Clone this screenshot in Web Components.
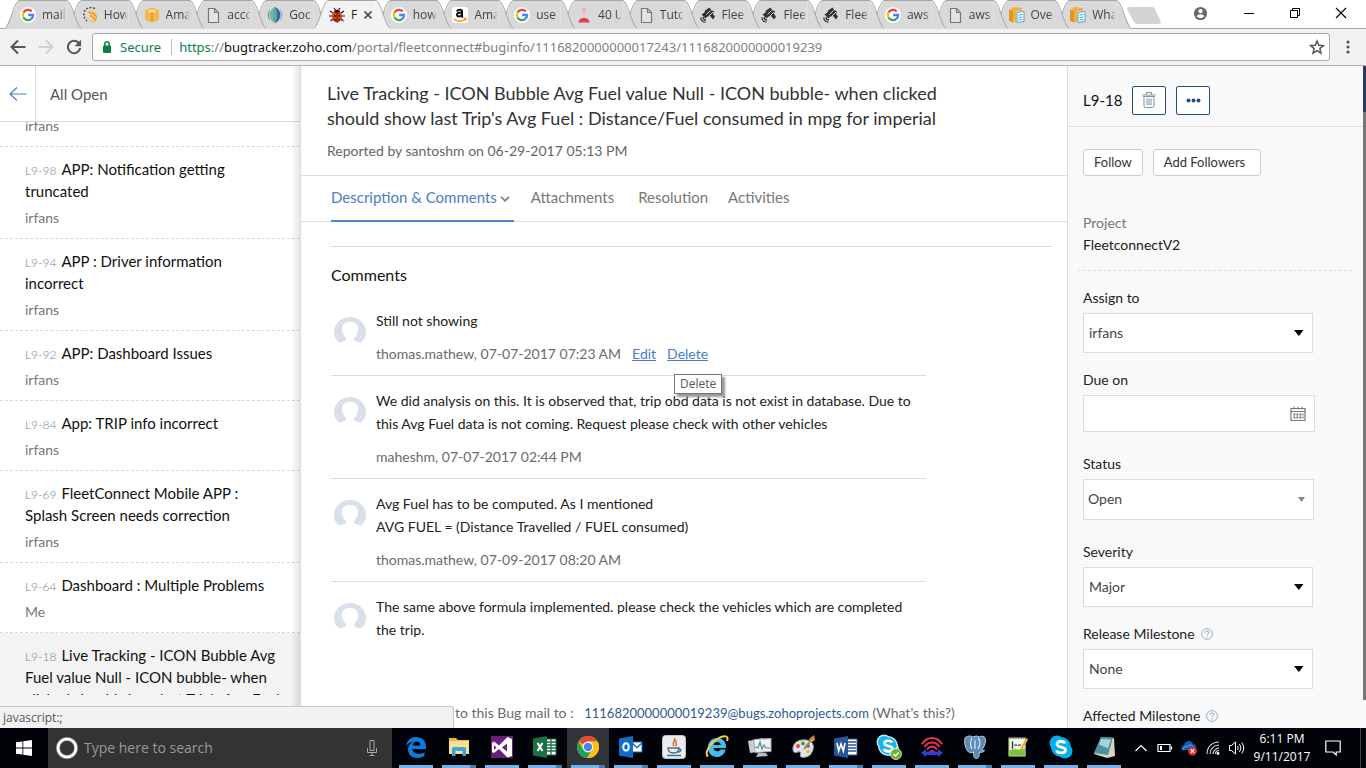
<!DOCTYPE html>
<html lang="en">
<head>
<meta charset="utf-8">
<title>FleetConnect - Bug L9-18</title>
<style>
html,body{margin:0;height:100%}
body{overflow:hidden;background:#fff;font-family:Lato,Carlito,sans-serif}
</style>
</head>
<body>
<desktop-screen></desktop-screen>
<script>
const ICONS={
google:['0 0 24 24','<circle cx="12" cy="12" r="12" fill="#fff"/><g fill="none" stroke-width="3.4"><path stroke="#ea4335" d="M17.6 6.6A7.8 7.8 0 0 0 5.2 8.2"/><path stroke="#fbbc05" d="M5.2 8.2a7.8 7.8 0 0 0 0 7.6"/><path stroke="#34a853" d="M5.2 15.8a7.8 7.8 0 0 0 11.800 2"/><path stroke="#4285f4" d="M17 17.800a7.800 7.800 0 0 0 2.700-5.800H12.200"/></g>'],
how:['0 0 16 16','<path fill="#f6a12a" d="M6 5c4-3 8-1 9 3 1 4-2 8-6 8 2-1 3-2 3-4-2 2-4 2-6 2 3-1 4-2 4-4-2 1-4 1-6 0 3 0 4-1 4-2-1-1-1-2-2-3z"/><path fill="none" stroke="#fff" stroke-width=".7" d="M6 7c3 0 6 2 8 4M5 9c3 1 5 2 6 5M8 4c3 0 5 1 7 4"/><path fill="none" stroke="#444" stroke-width="1.400" stroke-dasharray="2 1.500" d="M13 1.500C8-.5 3 1 2 6c-.5 3 .5 6 3 8"/>'],
cube:['0 0 16 16','<path fill="#f2b84b" d="M1 3l5-2h4l5 2v10l-5 2H6l-5-2z"/><path fill="#f9d58d" d="M4 3.500l4-1.500 4 1.500v2H4z"/><path fill="#e2a233" d="M7 6h2v8H7z"/>'],
page:['0 0 16 16','<path fill="#e4e4e4" stroke="#777" stroke-width="1.200" d="M3.500 1.500h6l4 4v10h-10z"/><path fill="none" stroke="#777" stroke-width="1.200" d="M9.500 1.500v4h4"/>'],
globe:['0 0 16 16','<path fill="#6cc08f" d="M8 0C1 2 1 14 8 16z"/><path fill="#44608f" d="M8 0c7 2 7 14 0 16z"/><path fill="#8583c8" d="M3 2C0 6 0 10 3 14c-1-4-1-8 0-12z"/><path fill="#7fa8cf" d="M13 2c3 4 3 8 0 12 1-4 1-8 0-12z"/><path fill="#5aa7ae" d="M8 0C5 5 5 11 8 16c3-5 3-11 0-16z"/>'],
bug:['0 0 16 16','<path fill="none" stroke="#3a1409" stroke-width="1.200" d="M5 1l2 3M11 1L9 4M4 6L1 4M12 6l3-2M3 9H0M13 9h3M4 12l-2.500 2M12 12l2.500 2"/><ellipse cx="8" cy="9.500" rx="5" ry="6" fill="#d8421c"/><path fill="#3a1409" d="M5 5c0-3 6-3 6 0L8 6zM7.600 5h.8v10.500h-.8zM5 8h1.600v1.800H5zM9.400 8H11v1.800H9.400zM5 12h1.600v1.600H5zM9.400 12H11v1.600H9.400z"/>'],
amazon:['0 0 16 16','<rect width="16" height="16" rx="3" fill="#fff"/><path fill="none" stroke="#111" stroke-width="2" d="M5 4.500C5.500 2 10 2 10 4.500V9c0 .6.3 1 1 1.300M10 5.500C6.500 5.300 4.800 6.200 5 8c.3 2 3.800 2 5-.5"/><path fill="none" stroke="#f90" stroke-width="1.500" d="M1.500 12c4 3 9 3 12 0M12 11.500h2l-.5 2"/>'],
flask:['0 0 16 16','<path fill="#efb6b6" d="M6 1h4v4L8.500 7h-1L6 5z"/><path fill="#eccaca" d="M7 8h2l1.500 3h-5z"/><path fill="#e2404a" d="M4 12c1-1.500 7-1.500 8 0l2 3.500H2z"/>'],
sat:['0 0 16 16','<g fill="#333"><path d="M5 3.500l4.500-3 2 3 2.500.5-1 3 2 2.500-2 3-3-3.500-3 .5-3-2.500z"/><path d="M1.500 7.500l3-2 3 4-2 2z"/></g><path stroke="#d9d9d9" d="M6.500 7.500l4-4M9 9l4-4"/><path fill="none" stroke="#333" stroke-width="1.300" d="M.8 10.500a5 5 0 0 0 4.700 4.700M3 10a3 3 0 0 0 3 3"/>'],
awsdoc:['0 0 16 16','<path fill="#f1b13c" d="M0 3l5-3 8 1v3H7v11l-4 .5-3-2z"/><path fill="#dc9623" d="M0 3l4 1v11.500l-4-2z"/><path fill="#fff" stroke="#4aa3dd" d="M8 5.500l7-1v10l-7 1z"/><path stroke="#4aa3dd" d="M9.500 8l4-.5M9.500 10.500l4-.5M9.500 13l4-.5"/>'],
back:['0 0 16 16','<path fill="none" stroke="#555" stroke-width="2" d="M15.500 8H2M8 1.500L1.500 8 8 14.500"/>'],
fwd:['0 0 16 16','<path fill="none" stroke="#d0d0d0" stroke-width="2" d="M.5 8H14M8 1.500L14.500 8 8 14.500"/>'],
reload:['0 0 16 16','<path fill="none" stroke="#555" stroke-width="2" d="M13.200 4.500A6.200 6.200 0 1 0 14.200 9"/><path fill="#555" d="M15 .8v6.400H8.600z"/>'],
lock:['0 0 10 12','<rect x="1" y="4.500" width="8" height="7.500" rx="1" fill="#0b8043"/><path fill="none" stroke="#0b8043" stroke-width="1.500" d="M2.800 5V3a2.200 2.200 0 0 1 4.400 0v2"/>'],
star:['0 0 16 16','<path fill="none" stroke="#555" stroke-width="1.500" stroke-linejoin="miter" d="M8 2l1.800 4.200 4.600.4-3.500 3 1.100 4.500L8 11.700l-4 2.400 1.100-4.500-3.500-3 4.600-.4z"/>'],
dots:['0 0 16 16','<g fill="#555"><circle cx="8" cy="3" r="1.600"/><circle cx="8" cy="8" r="1.600"/><circle cx="8" cy="13" r="1.600"/></g>'],
user:['0 0 16 16','<circle cx="8" cy="8" r="7" fill="#666"/><circle cx="8" cy="5.500" r="2.200" fill="#fff"/><path fill="#fff" d="M3.800 11c1-3 7.400-3 8.400 0-2 2.600-6.400 2.600-8.400 0z"/>'],
min:['0 0 12 12','<path stroke="#000" d="M1 6.500h10"/>'],
restore:['0 0 12 12','<path fill="none" stroke="#000" d="M1.500 3.500h7v7h-7zM3.500 3.500v-2h7v7h-2"/>'],
close:['0 0 12 12','<path stroke="#000" stroke-width="1.100" d="M1 1l10 10M11 1L1 11"/>'],
tabx:['0 0 10 10','<path stroke="#444" stroke-width="1.700" d="M1.500 1.500l7 7M8.500 1.500l-7 7"/>'],
listback:['0 0 18 14','<path fill="none" stroke="#4c80c8" stroke-width="1.200" d="M17.500 7H1M8 .5L1 7l7 6.500"/>'],
caret:['0 0 10 6','<path fill="none" stroke="#7b8494" stroke-width="1.800" d="M1 .8l4 4 4-4"/>'],
avatar:['0 0 32 27','<path fill="#dadfec" d="M5.500 25.500C1.500 23 0 19 0 15.500 0 6.500 7 0 16 0s16 6.500 16 15.500c0 3.500-1.500 7.500-5.500 10l-5-1.500c-2-.8-2-2-1-3.500 2.200-2.500 3.500-5 3.500-8.500 0-4.500-3-7-8-7s-8 2.500-8 7c0 3.500 1.300 6 3.500 8.500 1 1.500 1 2.700-1 3.500z"/>'],
trash:['0 0 14 16','<path fill="none" stroke="#7d8fa8" d="M.5 3h13M4.500 2.500v-2h5v2M2 5.500v8.500q0 1.500 1.500 1.500h7q1.500 0 1.500-1.500V5.500M1 4.500h12M5 6.500V13M7 6.500V13M9 6.500V13"/>'],
more:['0 0 15 5','<g fill="#244f86"><circle cx="2.500" cy="2.500" r="2"/><circle cx="7.500" cy="2.500" r="2"/><circle cx="12.500" cy="2.500" r="2"/></g>'],
tri:['0 0 10 6','<path fill="#000" d="M0 0h9.500L4.800 6z"/>'],
tri2:['0 0 7 5','<path fill="#888" d="M0 0h7L3.500 5z"/>'],
cal:['0 0 16 16','<path fill="#fff" stroke="#777" stroke-width="1.200" d="M1 2.500h14v12H1z"/><path stroke="#777" d="M1 5.500h14M4 .5v3M8 .5v3M12 .5v3"/><path stroke="#666" stroke-width="1.800" stroke-dasharray="1.800 1.200" d="M3.500 8.500h10M3.500 11.500h10"/>'],
help:['0 0 12 12','<circle cx="6" cy="6" r="5.400" fill="none" stroke="#8fa6cc" stroke-width=".9"/><path fill="none" stroke="#7c97c4" d="M4.300 4.700c0-2.200 3.500-2.200 3.500 0C7.800 6 6 6 6 7.300M6 8.300v1.200"/>'],
win:['0 0 16 16','<path fill="#fff" d="M0 2.300l6.500-.9v6.200H0zM7.300 1.300L16 0v7.600H7.300zM0 8.400h6.500v6.200L0 13.700zM7.300 8.400H16V16l-8.700-1.200z"/>'],
cortana:['0 0 22 22','<circle cx="11" cy="11" r="9" fill="none" stroke="#888" stroke-width="4"/><circle cx="11" cy="11" r="9" fill="none" stroke="#fff" stroke-width="2.600"/>'],
mic:['0 0 12 16','<path fill="none" stroke="#aaa" d="M4 .5h4v10H4zM1.500 8v4.500h9V8M6 12.500v3M3.500 15.500h5"/>'],
edge:['0 0 22 22','<path fill="#0a7ddc" d="M1 10C2 4 6 1 11 1c6 0 10 4 10 9.500V13H7.500c.2 3.500 3 4.800 6 4.800 2.500 0 4.500-.7 6-1.600v3.900C17.500 21.300 15 22 12.500 22 7 22 3 18.500 3 13.500c0-3.500 2-6.200 5-7.800-3 .6-5.500 2-7 4.300zM7.600 9.500h7.700c0-2.500-1.300-4-3.700-4-2.300 0-3.700 1.700-4 4z"/>'],
folder:['0 0 22 22','<path fill="#e5b849" d="M1 2h7l2 2h11v5H1z"/><path fill="#fbe08f" d="M1 5h20v13H1z"/><path fill="#39a5d8" d="M4 20v-7q0-2 2-2h10q2 0 2 2v7h-3.500v-5h-7v5z"/>'],
vs:['0 0 22 22','<path fill="#68217a" d="M0 0h22v22H0z"/><path fill="#fff" fill-rule="evenodd" d="M1 7l2-1.500 5 4L16.500 1 21 3v17l-4.500 1.500L8 13l-5 4-2-1zM3 9v5l2.500-2.500zM11 11.500l5 4v-8z"/>'],
excel:['0 0 24 22','<path fill="#fff" stroke="#1d7044" d="M12 3h11v16H12z"/><path stroke="#1d7044" stroke-width="1.300" d="M13 6h10M13 9h10M13 12h10M13 15h10M18 3v16"/><path fill="#1d7044" d="M0 2.500L14 0v22L0 19.500z"/><path stroke="#fff" stroke-width="2" d="M4.500 7l5 8M9.500 7l-5 8"/>'],
chrome:['0 0 22 22','<circle cx="11" cy="11" r="11" fill="#fbc116"/><path fill="#df4a3a" d="M11 11L1.500 5.500A11 11 0 0 1 20.500 5.500H11z"/><path fill="#1fa15d" d="M1.500 5.500A11 11 0 0 0 10 22l5.500-8.500L11 11 6.200 13.500z"/><path fill="#fbc116" d="M11 5.500h9.500A11 11 0 0 1 10 22l5.500-8.500z"/><circle cx="11" cy="11" r="5.400" fill="#fff"/><circle cx="11" cy="11" r="4.200" fill="#4a83ec"/>'],
outlook:['0 0 24 22','<path fill="#fff" stroke="#0f6fc6" d="M12 6h11v10H12z"/><path fill="none" stroke="#0f6fc6" stroke-width="1.500" d="M13 7l5 4.500L23 7"/><path fill="#0f6fc6" d="M0 2.500L14 0v22L0 19.500z"/><ellipse cx="7" cy="11" rx="2.800" ry="3.700" fill="none" stroke="#fff" stroke-width="2"/>'],
java:['0 0 24 24','<rect x=".5" y=".5" width="23" height="23" rx="3" fill="#e9edf0" stroke="#b9c3ca"/><path fill="none" stroke="#e4702a" stroke-width="1.500" d="M12 3c3 2-3 4 0 8M14.500 5c-3 2 2 3-1 6"/><path fill="none" stroke="#48708e" stroke-width="1.400" d="M6 13h11q0 5-5.500 5T6 13zM17 14c3 0 2 3-1 3M5 20.500h14"/>'],
ie:['0 0 24 24','<path fill="#45bdf0" d="M12 3c6 0 9.500 4 9 10H8.500c.5 3.500 5 4.500 7 1.500h5.300C19 20 16 22 12 22 6.500 22 3 18 3 12.500S6.500 3 12 3zm-3.500 7h7.300c-.5-4-6.500-4-7.300 0z"/><path fill="none" stroke="#f7cf30" stroke-width="2" d="M3 21.500C-1 18 5 8 13 3.500 20-.5 24 1 22 6"/>'],
taskmgr:['0 0 24 22','<path fill="#c9ccd0" d="M0 5l15-3v13L2 17z"/><path fill="#eef1f4" stroke="#aab" d="M6 3.500l17-1v13l-16 1z"/><path fill="none" stroke="#5a86a8" stroke-width="1.200" d="M7 11l3 1 2-6 2 7 2-4 2 3h4"/><path fill="#b8bcc2" d="M10 17h8l2 3-12 1z"/>'],
paint:['0 0 24 24','<path fill="#dfe5ea" stroke="#93a3b1" d="M2 15C1 8 8 4 15 5s9 6 6 12c-2 5-8 6-11 5-2-1 1-4-1-5s-6 3-7-2z"/><circle cx="7" cy="11" r="2" fill="#e6492d"/><circle cx="12" cy="8.500" r="2" fill="#39a845"/><circle cx="17" cy="11" r="2" fill="#3b78c9"/><circle cx="17" cy="16.500" r="2" fill="#eec12f"/><path stroke="#c1772e" stroke-width="2" d="M13 14L21 4"/><path fill="#c98d4b" d="M18 4l5-4 1 5-4 3z"/>'],
word:['0 0 24 22','<path fill="#fff" stroke="#2a5699" d="M12 3h11v16H12z"/><path stroke="#2a5699" stroke-width="1.300" d="M13 6h9M13 9h9M13 12h9M13 15h9"/><path fill="#2a5699" d="M0 2.500L14 0v22L0 19.500z"/><path fill="none" stroke="#fff" stroke-width="1.600" d="M3 7l1.700 8L7 8l2.300 7L11 7"/>'],
skypebiz:['0 0 26 26','<circle cx="8" cy="8" r="7.500" fill="#bfe8fa"/><circle cx="16" cy="15" r="7" fill="#bfe8fa"/><circle cx="12" cy="12" r="10" fill="#bfe8fa"/><circle cx="8" cy="8" r="6" fill="#1bb3ee"/><circle cx="12" cy="12" r="8.500" fill="#1bb3ee"/><path fill="none" stroke="#fff" stroke-width="2.600" d="M16 8.500c-1-2.500-7.500-2.500-7.500.7 0 3.600 8 1.800 8 5.500 0 3.500-7.500 3.500-8.500.3"/><circle cx="20" cy="20" r="5.500" fill="#6bb324" stroke="#eee" stroke-width=".8"/><path fill="none" stroke="#fff" stroke-width="1.500" d="M17.500 20l2 2 3.300-3.700"/>'],
waves:['0 0 24 22','<g fill="none" stroke="#e8384f" stroke-width="1.800"><path d="M2 8c5-8 15-8 20 0M4.500 11c4-6 11-6 15 0M7 13.500c3-4 7-4 10 0M10 16c1-1.500 3-1.500 4 0"/></g><path fill="#343bd8" d="M1 17l5-4v2.500h12V13l5 4-5 4v-2H6v2z"/>'],
pg:['0 0 24 24','<path fill="#5c8db7" stroke="#bcd0e0" stroke-width="1" d="M2 3c3-3 6-2 8-1 3-1.500 5-1 6 0 4-2 7 0 6.500 4-.5 4-2 7-4 9l3 .5c-1 2-3 2-5 1.500-.5 3 0 6-3 6.500-3 0-3-3-3-6.500-2 1-4 1-5 0C2 13 1 7 2 3z"/><path fill="none" stroke="#dbe7f0" stroke-width="1.200" d="M9 3c-2 3-2 8 0 11M15 3c3 3 2 8 0 11M12 5v9"/>'],
npp:['0 0 22 24','<path fill="#f4f7ea" stroke="#98a66b" d="M1 2h18v20H1z"/><path fill="#7cc142" d="M1.500 16c5-4 11 1 17-3v8.500h-17z"/><path stroke="#333" stroke-width="1.500" d="M5 6v8M7 10h3M11 10h3"/><path stroke="#555" stroke-width="2" stroke-dasharray="1.500 1.500" d="M2 2h16"/><path stroke="#e9b52c" stroke-width="2.600" d="M21 3l-7 12"/>'],
skype:['0 0 24 24','<circle cx="8" cy="8" r="7.500" fill="#00aff0"/><circle cx="16" cy="16" r="7.500" fill="#00aff0"/><circle cx="12" cy="12" r="10" fill="#00aff0"/><path fill="none" stroke="#fff" stroke-width="2.800" d="M16 8.500c-1-2.800-8-2.800-8 .7 0 3.800 8.500 2 8.500 5.800 0 3.700-8 3.700-9 .3"/>'],
notepad:['0 0 24 22','<path fill="#d9d3c4" d="M2 18L9 1l13 1 1 18-8 2z"/><path fill="#4e8f9c" d="M2 17L9 1l12 .5L16 19z"/><path fill="#a5d3dc" d="M9 3l10 .5-3 9-9-4z"/>'],
chev:['0 0 12 8','<path fill="none" stroke="#fff" stroke-width="1.200" d="M.5 7L6 1.500 11.500 7"/>'],
battery:['0 0 16 10','<path fill="none" stroke="#fff" stroke-width="1.200" d="M1 1.500h12v7H1zM14.500 3.500v3"/><path fill="#fff" d="M3 3h2v4H3z"/>'],
onedrive:['0 0 18 16','<path fill="#0a63b5" d="M2 10C0 7 3 5 4 5c1-5 8-5 9-1 3 0 4 4 2 6z"/><path fill="none" stroke="#6aaee5" d="M3 10c0-3 3-4 4-3 2-3 6-2 6 1"/><circle cx="12.500" cy="11" r="4.500" fill="#e02b3c"/><path stroke="#fff" stroke-width="1.300" d="M10.800 9.300l3.400 3.400M14.200 9.300l-3.400 3.400"/>'],
wifi:['0 0 14 14','<g fill="none" stroke="#ddd" stroke-width="1.100"><path d="M1 13C1 6 6 1 13 1M4 13c0-5 4-9 9-9M7 13c0-3 3-6 6-6M9.500 13c0-2 1.500-3.500 3.500-3.500"/></g><circle cx="12" cy="12.500" r="1.400" fill="#fff"/>'],
vol:['0 0 16 14','<path fill="none" stroke="#fff" d="M.5 4.500h2l4-3.500v12l-4-3.500h-2zM8.500 5q1.500 2 0 4M10.500 3q3 4 0 8M12.700 1.500q4 5.500 0 11"/>'],
note:['0 0 16 16','<path fill="none" stroke="#fff" stroke-width="1.200" d="M.8 1h14.400v11h-4v3L8 12H.8z"/>']
};
class Base extends HTMLElement{
  connectedCallback(){
    if(this.shadowRoot)return;
    const t=document.createElement('template');
    t.innerHTML=this.view();
    this.attachShadow({mode:'open'}).append(t.content.cloneNode(true));
  }
  a(n,d=''){return this.getAttribute(n)??d}
}
const def=(n,view)=>customElements.define(n,class extends Base{view(){return view(this)}});

/* an icon from the ICONS table; w and h are its box */
def('ui-icon',e=>{
  const [vb,body]=ICONS[e.a('name')],w=e.a('w','16'),h=e.a('h',w);
  return `<style>:host{display:inline-block;flex:none;line-height:0}svg{display:block}</style>
  <svg width="${w}" height="${h}" viewBox="${vb}" aria-hidden="true">${body}</svg>`});

/* browser tab strip */
def('browser-tab',e=>{
  const on=e.hasAttribute('active');
  return `<style>
  :host{display:block;flex:1;min-width:0;height:29px;position:relative}
  :host([active]){z-index:99!important}
  .shape{position:absolute;left:0;top:0;width:calc(100% + 14px);height:29px;display:grid;grid-template-columns:14px 1fr 14px}
  .shape svg{display:block;width:100%;height:29px}
  button{all:unset;box-sizing:border-box;position:relative;width:100%;height:29px;padding-left:15px;display:flex;align-items:center;gap:6px;font:12px "Open Sans",sans-serif;color:#444}
  .t{flex:none;width:24px;overflow:hidden;white-space:nowrap;-webkit-mask:linear-gradient(90deg,#000 75%,transparent)}
  :host([active]) .t{width:6px;color:#222;-webkit-mask:none}
  </style>
  <div class="shape">${['M0 29L14 0V29z|M0 28.500C5 25 9 2 14 .5','M0 0h14v29H0z|M0 .5h14','M0 0L14 29H0z|M0 .5C5 2 9 25 14 28.500'].map(p=>{
    const [f,s]=p.split('|');
    return `<svg viewBox="0 0 14 29" preserveAspectRatio="none"><path d="${f}" fill="${on?'#f2f2f2':'#d9d9d9'}"/><path d="${s}" fill="none" stroke="#a5a5a5" vector-effect="non-scaling-stroke"/></svg>`}).join('')}</div>
  <button><ui-icon name="${e.a('icon')}"></ui-icon><span class="t"><slot></slot></span>${on?'<ui-icon name="tabx" w="10"></ui-icon>':''}</button>`});

def('browser-tabs',()=>{
  const tabs=[['google','mail'],['how','How'],['cube','Ama'],['page','accc'],['globe','Goc'],['bug','F'],['google','how'],['amazon','Ama'],['google','use'],['flask','40 U'],['page','Tutc'],['sat','Flee'],['sat','Flee'],['sat','Flee'],['google','aws'],['page','aws'],['awsdoc','Ove'],['awsdoc','Wha']];
  return `<style>
  :host{display:flex;height:29px;background:linear-gradient(#fff 28px,#a5a5a5 28px);padding-left:5px}
  .tabs{display:flex;flex:0 1 1112px;isolation:isolate}
  .new{all:unset;width:34px;height:17px;margin:7px 0 0 10px}
  .new svg{display:block}
  .win{margin-left:auto;padding-right:2px;display:flex;align-items:center;height:26px}
  .win button{all:unset;width:46px;display:grid;place-items:center}
  .win .u{width:52px}
  </style>
  <div class="tabs">${tabs.map(([i,t],n)=>`<browser-tab icon="${i}" style="z-index:${40-n}" ${n==5?'active':''}>${t}</browser-tab>`).join('')}</div>
  <button class="new" aria-label="New tab"><svg width="34" height="17"><path d="M2 0h23q2 0 3 2l6 13q0 2-2 2H10q-2 0-3-2L0 2Q0 0 2 0z" fill="#d4d4d4"/></svg></button>
  <div class="win"><button class="u" aria-label="Profile"><ui-icon name="user" w="15"></ui-icon></button><button aria-label="Minimize"><ui-icon name="min" w="12"></ui-icon></button><button aria-label="Restore"><ui-icon name="restore" w="12"></ui-icon></button><button aria-label="Close"><ui-icon name="close" w="12"></ui-icon></button></div>`});

def('browser-bar',()=>`<style>
  :host{display:flex;align-items:center;height:36px;background:#f2f2f2;border-bottom:1px solid #b4b4b4;font:13px "Noto Sans",sans-serif;padding-left:10px}
  button{all:unset;display:grid;place-items:center}
  .nav{display:flex;gap:12px;margin-right:10px}
  .box{flex:1;min-width:0;height:26px;display:flex;align-items:center;background:#fff;border:1px solid #a9a9a9;border-radius:3px;padding:0 4px 0 9px}
  .sec{color:#0b8043;margin:0 10px 0 8px}
  .sep{width:1px;height:16px;background:#bbb;margin-right:7px}
  .url{flex:1;white-space:nowrap;color:#808080}.url i{font-style:normal;color:#0b8043}.url b{font-weight:400;color:#111}
  .menu{width:36px}
  </style>
  <div class="nav"><button aria-label="Back"><ui-icon name="back"></ui-icon></button><button aria-label="Forward"><ui-icon name="fwd"></ui-icon></button><button aria-label="Reload"><ui-icon name="reload"></ui-icon></button></div>
  <div class="box"><ui-icon name="lock" w="10" h="12"></ui-icon><span class="sec">Secure</span><span class="sep"></span><span class="url"><i>https</i>://<b>bugtracker.zoho.com</b>/portal/fleetconnect#buginfo/1116820000000017243/1116820000000019239</span><button aria-label="Bookmark"><ui-icon name="star"></ui-icon></button></div>
  <button class="menu" aria-label="Menu"><ui-icon name="dots" w="16"></ui-icon></button>`);

/* left: list of bugs */
def('bug-item',e=>`<style>
  :host{display:block;padding:11px 20px 9px 25px;border-bottom:1px dashed #d8d8d8}
  :host([partial]){padding-top:0;margin-top:-7px}
  :host([partial]) .who{margin-top:0}
  :host([selected]){background:#f3f3f3}
  a{display:block;color:#111;text-decoration:none;font-size:15px;line-height:22px;overflow:hidden;max-height:51px}
  .id{font-size:12px;line-height:1;font-weight:300;color:#7c828c;margin-right:5px}
  .who{margin-top:5px;font-size:14px;line-height:22px;color:#777}
  </style>${e.a('no')?`<a href="#${e.a('no')}"><span class="id">${e.a('no')}</span><slot></slot></a>`:''}<div class="who">${e.a('who')}</div>`);

def('bug-list',()=>`<style>
  :host{display:flex;flex-direction:column;flex:none;width:300px;position:relative;overflow:hidden;border-right:1px solid #dcdcdc}
  header{flex:none;display:flex;height:55px;border-bottom:1px solid #dcdcdc;align-items:stretch}
  header button{all:unset;width:35px;border-right:1px solid #dcdcdc;display:grid;place-items:center}
  h2{margin:0 0 0 14px;font-size:15px;font-weight:400;line-height:57px;color:#555}
  .items{flex:1;min-height:0;overflow:hidden}
  .fade{position:absolute;top:0;right:0;bottom:0;width:9px;background:linear-gradient(90deg,transparent,rgba(0,0,0,.1))}
  </style>
  <header><button aria-label="Back to list"><ui-icon name="listback" w="18" h="14"></ui-icon></button><h2>All Open</h2></header>
  <div class="items">
  <bug-item partial who="irfans"></bug-item>
  <bug-item no="L9-98" who="irfans">APP: Notification getting truncated</bug-item>
  <bug-item no="L9-94" who="irfans">APP : Driver information incorrect</bug-item>
  <bug-item no="L9-92" who="irfans">APP: Dashboard Issues</bug-item>
  <bug-item no="L9-84" who="irfans">App: TRIP info incorrect</bug-item>
  <bug-item no="L9-69" who="irfans">FleetConnect Mobile APP : Splash Screen needs correction</bug-item>
  <bug-item no="L9-64" who="Me">Dashboard : Multiple Problems</bug-item>
  <bug-item selected no="L9-18" who="irfans">Live Tracking - ICON Bubble Avg Fuel value Null - ICON bubble- when clicked should show last Trip's Avg Fuel</bug-item>
  </div><div class="fade"></div>`);

/* middle: bug detail */
def('bug-comment',e=>`<style>
  :host{display:flex;gap:10px;padding:13px 0 10px 3px;border-bottom:1px solid #dcdcdc;font-size:14px;line-height:23px;color:#222}
  :host([last]){border:0}
  ui-icon{margin-top:8px}
  .meta{margin-top:10px;color:#6b6b6b;display:flex;gap:11px}
  .meta a{color:#4c7cc9;text-decoration:underline}
  .tipwrap{position:relative}
  .tip{position:absolute;z-index:3;left:7px;top:32px;box-sizing:border-box;height:20px;padding:0 5px;border:1px solid #767676;background:#fff;box-shadow:3px 3px 2px #999;font:12px/18px "Open Sans",sans-serif;color:#575757}
  </style><ui-icon name="avatar" w="32" h="27"></ui-icon><div><slot></slot>
  ${e.a('by')?`<div class="meta"><span>${e.a('by')}</span>${e.hasAttribute('own')?'<a href="#edit">Edit</a><span class="tipwrap"><a href="#delete">Delete</a><span class="tip" role="tooltip">Delete</span></span>':''}</div>`:''}</div>`);

def('bug-detail',()=>`<style>
  :host{display:flex;flex-direction:column;flex:1;min-width:0;overflow:hidden;background:#fff}
  header{padding:15px 120px 0 26px;height:94px;border-bottom:1px solid #dcdcdc}
  h1{margin:0;font-size:18px;line-height:25px;font-weight:400;color:#333}
  .rep{margin-top:9px;font-size:14px;line-height:22px;color:#666}
  nav{display:flex;flex:none;height:45px;border-bottom:1px solid #dcdcdc;padding-left:30px;gap:20px;font-size:15px;line-height:42px}
  nav a{color:#777;text-decoration:none;white-space:nowrap}
  nav a.on{color:#4c7cc9;display:flex;align-items:flex-start;gap:3px;height:46px;box-sizing:border-box;border-bottom:2px solid #4c86c9;padding-right:4px;margin-right:-3px}
  nav .on ui-icon{margin-top:20px}
  nav .res{margin-left:4px}
  .body{flex:1;display:flex;flex-direction:column;padding:24px 15px 0 30px;min-height:0}
  hr{width:100%;margin:0;border:0;border-top:1px solid #dcdcdc}
  h3{margin:17px 0 10px;font-size:16px;line-height:22px;font-weight:400;color:#111}
  .list{max-width:595px}
  .mail{margin:auto 0 4px;padding-left:124px;font-size:14px;line-height:23px;color:#6b6b6b;white-space:nowrap}
  .mail a{color:#2f5a94;font-size:13px;line-height:1;text-decoration:none;margin-left:7px}
  </style>
  <header><h1>Live Tracking - ICON Bubble Avg Fuel value Null - ICON bubble- when clicked should show last Trip's Avg Fuel : Distance/Fuel consumed in mpg for imperial</h1>
  <div class="rep">Reported by santoshm on 06-29-2017 05:13 PM</div></header>
  <nav><a class="on" href="#comments">Description &amp; Comments<ui-icon name="caret" w="10" h="6"></ui-icon></a><a href="#attachments">Attachments</a><a class="res" href="#resolution">Resolution</a><a href="#activities">Activities</a></nav>
  <div class="body"><hr><h3>Comments</h3><div class="list">
  <bug-comment by="thomas.mathew, 07-07-2017 07:23 AM" own>Still not showing</bug-comment>
  <bug-comment by="maheshm, 07-07-2017 02:44 PM">We did analysis on this. It is observed that, trip obd data is not exist in database. Due to this Avg Fuel data is not coming. Request please check with other vehicles</bug-comment>
  <bug-comment by="thomas.mathew, 07-09-2017 08:20 AM">Avg Fuel has to be computed. As I mentioned<br>AVG FUEL = (Distance Travelled / FUEL consumed)</bug-comment>
  <bug-comment last>The same above formula implemented. please check the vehicles which are completed the trip.</bug-comment>
  </div><div class="mail">to this Bug mail to : <a href="#mail">1116820000000019239@bugs.zohoprojects.com</a> (What's this?)</div></div>`);

/* right: properties */
def('bug-field',e=>{
  const k=e.a('kind','select'),v=e.a('value');
  return `<style>
  :host{display:block;font-size:14px;color:#222}
  label,.lab{display:flex;align-items:center;gap:6px;line-height:20px;margin-bottom:5px;color:#222}
  .c{display:grid;align-items:center}
  .c>*{grid-area:1/1}
  select,input{appearance:none;box-sizing:border-box;width:100%;height:40px;margin:0;border:1px solid #dcdcdc;border-radius:0;background:#fff;padding:0 30px 2px 5px;font:14px Lato,Carlito,sans-serif;color:#444;outline:0}
  input{height:37px}
  select.small{height:41px;padding-left:4px}
  ui-icon.i{justify-self:end;margin-right:9px;pointer-events:none}
  </style>${k=='none'?`<div class="lab">${e.a('label')}<ui-icon name="help" w="12"></ui-icon></div>`:`<label for="f">${e.a('label')}${e.hasAttribute('help')?'<ui-icon name="help" w="12"></ui-icon>':''}</label>
  <div class="c">${k=='date'?`<input id="f" type="text"><ui-icon class="i" name="cal" w="16"></ui-icon>`:`<select id="f" class="${k}"><option>${v}</option></select><ui-icon class="i" name="${k=='small'?'tri2':'tri'}" w="${k=='small'?7:10}" h="${k=='small'?5:6}"></ui-icon>`}</div>`}`});

def('bug-props',()=>`<style>
  :host{display:flex;flex-direction:column;flex:none;box-sizing:border-box;width:299px;background:#f9f9f9;border-left:1px solid #dcdcdc;overflow:hidden;position:relative}
  header{display:flex;flex:none;align-items:center;gap:10px;box-sizing:border-box;height:61px;padding:8px 0 0 15px;border-bottom:1px solid #dcdcdc;font-size:15px;color:#111}
  header button{box-sizing:border-box;width:34px;height:29px;border:1px solid #244f86;border-radius:2px;background:#fff;padding:0;display:grid;place-items:center}
  .f{display:flex;gap:10px;padding:22px 15px 0}
  .f button{box-sizing:border-box;height:27px;border:1px solid #ccc;border-radius:3px;background:#fff;padding:0 15px 2px 10px;font:13px Lato,Carlito,sans-serif;color:#333}
  .f button:first-child{padding-right:10px}
  .p{margin:36px 14px 0 10px;padding:0 5px 14px;border-bottom:1px dashed #dcdcdc;font-size:14px;line-height:22px;color:#222}
  .p span{display:block;color:#777}
  .fields{display:flex;flex-direction:column;padding:17px 53px 0 15px;gap:17px}
  .wide{margin-right:-2px}.st{margin:5px -1px 5px 0}
  .bar{position:absolute;right:0;top:0;width:3px;height:634px;background:linear-gradient(#2b3b66 46px,#777 46px)}
  </style>
  <header>L9-18<button aria-label="Delete bug"><ui-icon name="trash" w="14" h="16"></ui-icon></button><button aria-label="More"><ui-icon name="more" w="15" h="5"></ui-icon></button></header>
  <div class="f"><button>Follow</button><button>Add Followers</button></div>
  <div class="p"><span>Project</span>FleetconnectV2</div>
  <div class="fields">
  <bug-field label="Assign to" value="irfans"></bug-field>
  <bug-field class="wide" kind="date" label="Due on"></bug-field>
  <bug-field class="st" kind="small" label="Status" value="Open"></bug-field>
  <bug-field label="Severity" value="Major"></bug-field>
  <bug-field help label="Release Milestone" value="None"></bug-field>
  <bug-field help kind="none" label="Affected Milestone"></bug-field>
  </div><div class="bar"></div>`);

/* Windows taskbar */
def('task-bar',()=>{
  const apps=[['edge',22],['folder',22],['vs',22],['excel',24],['chrome',22],['outlook',24],['java',24],['ie',24],['taskmgr',24],['paint',24],['word',24],['skypebiz',26],['waves',24],['pg',24],['npp',22],['skype',24],['notepad',24]],multi=[1,3,4,5,10,13];
  return `<style>
  :host{display:flex;flex:none;height:40px;background:#000308;color:#fff;font-family:"Open Sans",sans-serif}
  button{all:unset;display:grid;place-items:center}
  .start{width:48px}
  .search{width:344px;box-sizing:border-box;display:flex;align-items:center;background:#333;padding:0 14px 0 8px;gap:6px}
  input{all:unset;flex:1;min-width:0;font-size:14px;line-height:20px;color:#999}
  input::placeholder{color:#999;opacity:1}
  .apps{display:flex;padding:0 0 0 7px;gap:9px}
  .apps button{width:34px;height:40px;box-sizing:border-box;border-bottom:3px solid #76b0e8;position:relative}
  .apps .m{border-image:linear-gradient(90deg,#76b0e8 26px,#4b7bab 26px) 3}
  .apps .on{background:#303438;box-shadow:-4px 0 #303438,4px 0 #303438}
  .tray{margin-left:auto;display:flex;align-items:center}
  .tray button{width:24px;height:40px}
  .clock{width:66px;text-align:center;font-size:12px;line-height:18px}
  .tray .n{width:36px}.end{width:5px;height:40px;margin-left:9px;border-left:1px solid #444}
  </style>
  <button class="start" aria-label="Start"><ui-icon name="win" w="16"></ui-icon></button>
  <div class="search"><ui-icon name="cortana" w="22"></ui-icon><input type="text" aria-label="Search" placeholder="Type here to search"><ui-icon name="mic" w="12" h="16"></ui-icon></div>
  <div class="apps">${apps.map(([n,w],i)=>`<button aria-label="${n}" class="${n=='chrome'?'on ':''}${multi.includes(i)?'m':''}"><ui-icon name="${n}" w="${w}"></ui-icon></button>`).join('')}</div>
  <div class="tray"><button aria-label="Hidden icons"><ui-icon name="chev" w="12" h="8"></ui-icon></button><button aria-label="Battery"><ui-icon name="battery" w="16" h="10"></ui-icon></button><button aria-label="OneDrive"><ui-icon name="onedrive" w="18" h="16"></ui-icon></button><button aria-label="Network"><ui-icon name="wifi" w="14"></ui-icon></button><button aria-label="Volume"><ui-icon name="vol" w="16" h="14"></ui-icon></button><div class="clock">6:11 PM<br>9/11/2017</div><button class="n" aria-label="Notifications"><ui-icon name="note" w="16"></ui-icon></button><div class="end"></div></div>`});

def('desktop-screen',()=>`<style>
  :host{display:flex;flex-direction:column;height:100vh;overflow:hidden}
  browser-tabs,browser-bar{flex:none}
  main{flex:1;min-height:0;display:flex;position:relative}
  .status{position:absolute;left:0;bottom:0;z-index:5;box-sizing:border-box;width:454px;height:22px;border:1px solid #c8c8c8;border-width:1px 1px 0 0;border-radius:0 3px 0 0;background:#f2f2f2;padding-left:3px;font:12px/22px "Open Sans",sans-serif;color:#555}
  </style>
  <browser-tabs></browser-tabs><browser-bar></browser-bar>
  <main><bug-list></bug-list><bug-detail></bug-detail><bug-props></bug-props><div class="status">javascript:;</div></main>
  <task-bar></task-bar>`);
</script>
</body>
</html>
